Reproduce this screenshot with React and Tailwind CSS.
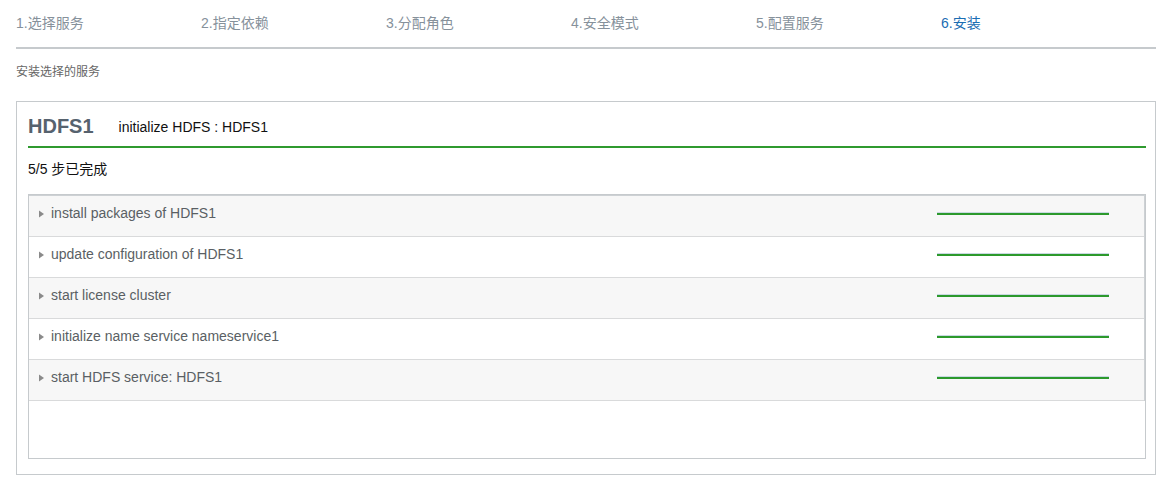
import { useState } from 'react';

const STEPS = ['1.选择服务', '2.指定依赖', '3.分配角色', '4.安全模式', '5.配置服务', '6.安装'];

const TASKS = [
  'install packages of HDFS1',
  'update configuration of HDFS1',
  'start license cluster',
  'initialize name service nameservice1',
  'start HDFS service: HDFS1',
];

const FONT = { fontFamily: 'Arial, "Liberation Sans", "Noto Sans CJK SC", sans-serif' };

export default function App() {
  const [active] = useState(5);

  return (
    <div className="min-h-[485px] bg-white pl-4 pr-[5px] text-[14px]" style={FONT}>
      {/* Wizard steps */}
      <div className="flex h-[49px] items-center border-b-2 border-[#c6cacd] pb-px">
        {STEPS.map((s, i) => (
          <div
            key={s}
            className={`w-[185px] shrink-0 ${i === active ? 'text-[#1b6db3]' : 'text-[#86919b]'}`}
          >
            {s}
          </div>
        ))}
      </div>

      <div className="mt-[15px] text-[12px] leading-4 text-[#666]">安装选择的服务</div>

      {/* Service panel */}
      <div className="mt-[21px] border border-[#c6cacd] pl-[11px] pr-[9px] pb-[15px]">
        <div className="flex h-[46px] items-end gap-[25px] border-b-2 border-[#2f9a2f] pb-[8px]">
          <span className="text-[20px] font-bold leading-6 text-[#56626e]">HDFS1</span>
          <span className="pb-px leading-5 text-[#111]">initialize HDFS : HDFS1</span>
        </div>

        <div className="mt-[11px] leading-5 text-[#111]">5/5 步已完成</div>

        <div className="mt-[15px] h-[265px] border border-[#c6cacd]">
          <div className="border-t border-r border-[#cdd1d4]">
            {TASKS.map((t, i) => (
              <div
                key={t}
                className={`flex h-[41px] items-center border-b border-[#d9dadb] pb-[5px] pl-[9px] ${
                  i === TASKS.length - 1 ? 'border-[#c6cacd]' : ''
                } ${i % 2 === 0 ? 'bg-[#f7f7f7]' : 'bg-white'}`}
              >
                <svg width="7" height="8" viewBox="0 0 7 8" className="mr-[6px] shrink-0">
                  <path d="M1 0.5 L6 4 L1 7.5 Z" fill="#8a8a8a" />
                </svg>
                <span className="flex-1 text-[#5a5f64]">{t}</span>
                <div className="mr-[35px] w-[172px]">
                  <div className="h-px bg-[#c9d9e2]" />
                  <div className="h-[2px] bg-[#2c992c]" />
                </div>
              </div>
            ))}
          </div>
        </div>
      </div>
    </div>
  );
}
